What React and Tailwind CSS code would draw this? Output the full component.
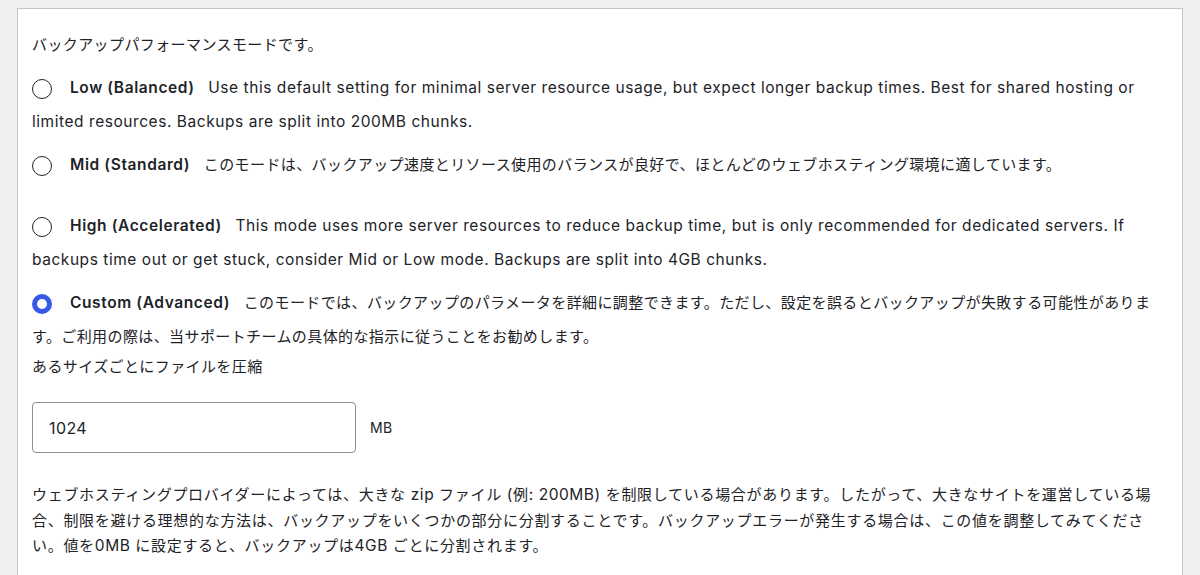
import { useState } from 'react';

const FONT = { fontFamily: '"Inter", "Noto Sans CJK JP", sans-serif' };

const MODES = [
  {
    id: 'low',
    label: 'Low (Balanced)',
    desc: 'Use this default setting for minimal server resource usage, but expect longer backup times. Best for shared hosting or limited resources. Backups are split into 200MB chunks.',
    gap: 'mb-[9px]',
  },
  {
    id: 'mid',
    label: 'Mid (Standard)',
    desc: 'このモードは、バックアップ速度とリソース使用のバランスが良好で、ほとんどのウェブホスティング環境に適しています。',
    gap: 'mb-[27px]',
  },
  {
    id: 'high',
    label: 'High (Accelerated)',
    desc: 'This mode uses more server resources to reduce backup time, but is only recommended for dedicated servers. If backups time out or get stuck, consider Mid or Low mode. Backups are split into 4GB chunks.',
    gap: 'mb-[9px]',
  },
  {
    id: 'custom',
    label: 'Custom (Advanced)',
    desc: 'このモードでは、バックアップのパラメータを詳細に調整できます。ただし、設定を誤るとバックアップが失敗する可能性があります。ご利用の際は、当サポートチームの具体的な指示に従うことをお勧めします。',
    gap: '',
  },
];

const CJK_RUN = /([\u3000-\u30ff\u4e00-\u9fff\uff00-\uffef]+)/;

// latin runs get a slightly bigger size so they keep the width of the original system font
function Mixed({ text }) {
  return text.split(CJK_RUN).map((part, i) =>
    !part ? null : CJK_RUN.test(part) ? (
      <span key={i}>{part}</span>
    ) : (
      <span key={i} className="text-[15.5px] tracking-[0.55px]">{part}</span>
    )
  );
}

// ─── radio dot ────────────────────────────────────────────────────────────────
function Radio({ checked }) {
  return (
    <span
      className={`inline-block w-5 h-5 rounded-full align-middle mr-[18px] bg-white ${
        checked ? 'border-[5.5px] border-[#3858e9]' : 'border border-[#1d2327]'
      }`}
    />
  );
}

function ModeOption({ mode, checked, onSelect }) {
  return (
    <div className={`leading-[34px] cursor-pointer ${mode.gap}`} onClick={onSelect}>
      <Radio checked={checked} />
      <span className="font-semibold text-[15.5px] tracking-[0.6px] mr-[9px]">{mode.label}</span>{' '}
      <Mixed text={mode.desc} />
    </div>
  );
}

export default function App() {
  const [mode, setMode] = useState('custom');
  const [size, setSize] = useState('1024');

  return (
    <div className="min-h-[575px] bg-[#f0f0f1] pt-2 pl-[17px] overflow-hidden" style={FONT}>
      <div className="w-[1166px] bg-white border border-[#c3c4c7] px-[14px] pt-[19px] pb-10 text-[15px] tracking-[0.4px] text-[#1d2327]">
        <div className="leading-[34px] mb-[9px]">バックアップパフォーマンスモードです。</div>

        {MODES.map(m => (
          <ModeOption key={m.id} mode={m} checked={mode === m.id} onSelect={() => setMode(m.id)} />
        ))}

        <div className="leading-[26px]">あるサイズごとにファイルを圧縮</div>

        <div className="flex items-center mt-[22px]">
          <input
            value={size}
            onChange={e => setSize(e.target.value)}
            className="w-[324px] h-[51px] border border-[#8c8f94] rounded-[4px] px-4 text-[16px] text-[#1d2327] outline-none"
          />
          <span className="ml-[14px] text-[14px]">MB</span>
        </div>

        <p className="mt-[29px] leading-[25.5px] tracking-[0.7px]">
          <Mixed text="ウェブホスティングプロバイダーによっては、大きな zip ファイル (例: 200MB) を制限している場合があります。したがって、大きなサイトを運営している場合、制限を避ける理想的な方法は、バックアップをいくつかの部分に分割することです。バックアップエラーが発生する場合は、この値を調整してみてください。値を0MB に設定すると、バックアップは4GB ごとに分割されます。" />
        </p>
      </div>
    </div>
  );
}
